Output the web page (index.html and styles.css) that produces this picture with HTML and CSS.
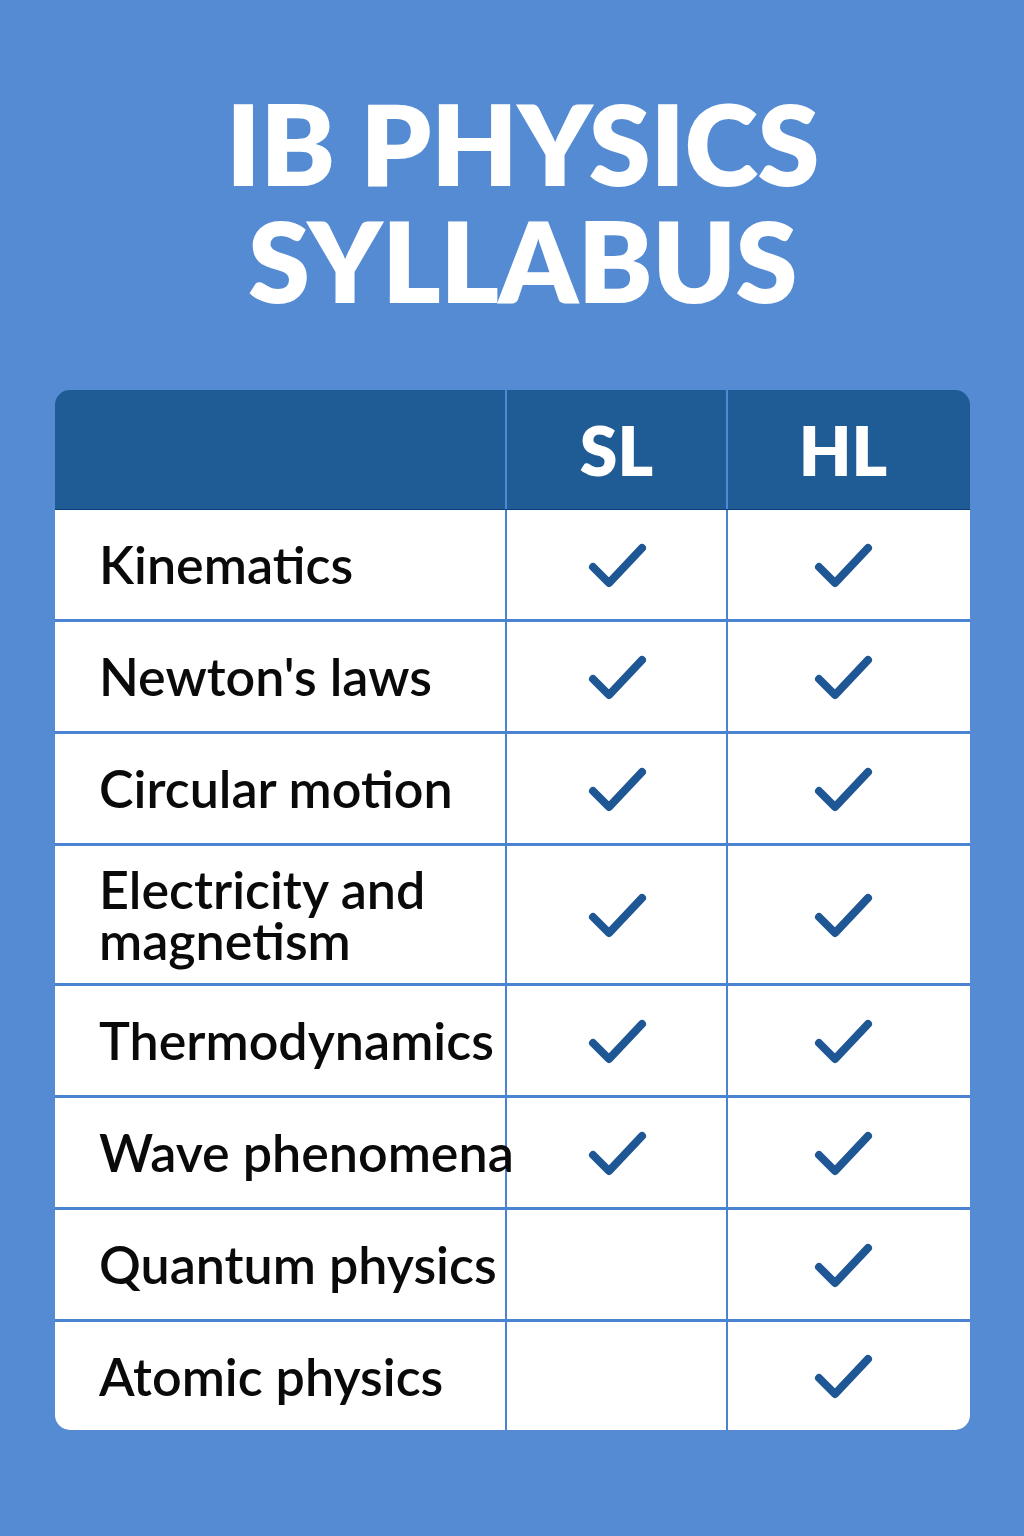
FILE: index.html
```html
<!DOCTYPE html>
<html lang="en">
<head>
<meta charset="utf-8">
<title>IB Physics Syllabus</title>
<link rel="stylesheet" href="styles.css">
</head>
<body>
<div class="page">
  <h1 class="title">IB PHYSICS<br>SYLLABUS</h1>
  <div class="table">
    <div class="thead">
      <div class="hcell"></div>
      <div class="hcell">SL</div>
      <div class="hcell hl">HL</div>
    </div>
    <div class="tbody">
      <div class="cell topic">Kinematics</div>
      <div class="cell mark"><svg class="check" viewBox="0 0 60 50"><path d="M6 27 L22 43 L55 8"/></svg></div>
      <div class="cell mark hl"><svg class="check" viewBox="0 0 60 50"><path d="M6 27 L22 43 L55 8"/></svg></div>

      <div class="cell topic">Newton's laws</div>
      <div class="cell mark"><svg class="check" viewBox="0 0 60 50"><path d="M6 27 L22 43 L55 8"/></svg></div>
      <div class="cell mark hl"><svg class="check" viewBox="0 0 60 50"><path d="M6 27 L22 43 L55 8"/></svg></div>

      <div class="cell topic">Circular motion</div>
      <div class="cell mark"><svg class="check" viewBox="0 0 60 50"><path d="M6 27 L22 43 L55 8"/></svg></div>
      <div class="cell mark hl"><svg class="check" viewBox="0 0 60 50"><path d="M6 27 L22 43 L55 8"/></svg></div>

      <div class="cell topic">Electricity and<br>magnetism</div>
      <div class="cell mark"><svg class="check" viewBox="0 0 60 50"><path d="M6 27 L22 43 L55 8"/></svg></div>
      <div class="cell mark hl"><svg class="check" viewBox="0 0 60 50"><path d="M6 27 L22 43 L55 8"/></svg></div>

      <div class="cell topic">Thermodynamics</div>
      <div class="cell mark"><svg class="check" viewBox="0 0 60 50"><path d="M6 27 L22 43 L55 8"/></svg></div>
      <div class="cell mark hl"><svg class="check" viewBox="0 0 60 50"><path d="M6 27 L22 43 L55 8"/></svg></div>

      <div class="cell topic">Wave phenomena</div>
      <div class="cell mark"><svg class="check" viewBox="0 0 60 50"><path d="M6 27 L22 43 L55 8"/></svg></div>
      <div class="cell mark hl"><svg class="check" viewBox="0 0 60 50"><path d="M6 27 L22 43 L55 8"/></svg></div>

      <div class="cell topic">Quantum physics</div>
      <div class="cell mark"></div>
      <div class="cell mark hl"><svg class="check" viewBox="0 0 60 50"><path d="M6 27 L22 43 L55 8"/></svg></div>

      <div class="cell topic">Atomic physics</div>
      <div class="cell mark"></div>
      <div class="cell mark hl"><svg class="check" viewBox="0 0 60 50"><path d="M6 27 L22 43 L55 8"/></svg></div>
    </div>
  </div>
</div>
</body>
</html>
```

FILE: styles.css
```css
html, body {
  margin: 0;
  padding: 0;
}
body {
  background: #548bd3;
  font-family: Lato, "Noto Sans", "Liberation Sans", sans-serif;
  width: 1024px;
  height: 1536px;
  overflow: hidden;
}
.page {
  padding: 84px 54px 0 55px;
}
.title {
  margin: 0 0 72px 0;
  padding-left: 20px;
  text-align: center;
  color: #ffffff;
  font-family: Lato, "Noto Sans", sans-serif;
  font-weight: 800;
  font-size: 112px;
  line-height: 117px;
  letter-spacing: -0.5px;
}
.table {
  width: 915px;
  border-radius: 15px;
  overflow: hidden;
  background: #4a84d0;
}
.thead {
  display: grid;
  grid-template-columns: 450px 219px 242px;
  column-gap: 2px;
  background: #4f89d3;
  border-bottom: 1px solid #0c3b80;
}
.hcell {
  height: 119px;
  background: #1f5b94;
  color: #ffffff;
  font-weight: 800;
  font-size: 68px;
  display: flex;
  align-items: center;
  justify-content: center;
}
.hl {
  padding-right: 12px;
}
.tbody {
  display: grid;
  grid-template-columns: 450px 219px 242px;
  grid-template-rows: 109px 109px 109px 137px 109px 109px 109px 108px;
  column-gap: 2px;
  row-gap: 3px;
  background: #4a84d0;
}
.cell {
  background: #ffffff;
  display: flex;
  align-items: center;
}
.topic {
  padding-left: 44px;
  font-size: 52px;
  font-weight: 600;
  line-height: 51px;
  color: #0a0a0a;
  white-space: nowrap;
  position: relative;
  z-index: 1;
  overflow: visible;
}
.mark {
  justify-content: center;
}
.check {
  width: 60px;
  height: 50px;
  fill: none;
  stroke: #1e5794;
  stroke-width: 8;
  stroke-linecap: round;
  stroke-linejoin: round;
}
```
